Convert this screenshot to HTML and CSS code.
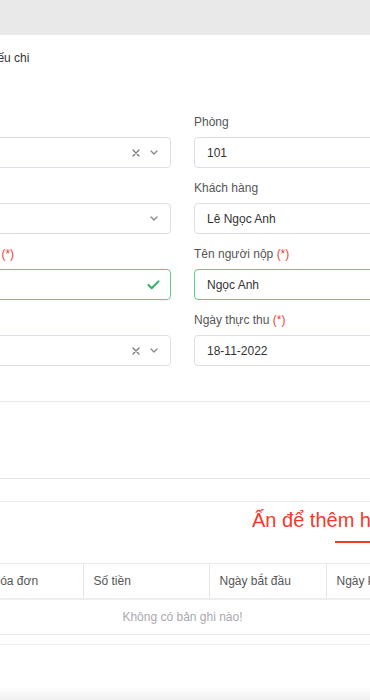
FILE: index.html
```html
<!DOCTYPE html>
<html lang="vi">
<head>
    <meta charset="utf-8">
    <title>Phiếu chi</title>
    <link rel="stylesheet" href="styles.css">
</head>
<body>
<div class="topbar"></div>
<div class="sheet">
    <h2 class="title">Thông tin phiếu chi</h2>

    <div class="form-grid">
        <div class="field">
            <label>Tòa nhà</label>
            <div class="control">
                <span class="value"></span>
                <span class="icons">
                    <svg class="ic-clear" viewBox="0 0 8 8"><path d="M1 1 7 7M7 1 1 7"/></svg>
                    <svg class="ic-caret" viewBox="0 0 8 5"><path d="M1 1 4 4 7 1"/></svg>
                </span>
            </div>
        </div>
        <div class="field">
            <label>Phòng</label>
            <div class="control"><span class="value">101</span></div>
        </div>

        <div class="field">
            <label>Hợp đồng</label>
            <div class="control">
                <span class="value"></span>
                <span class="icons">
                    <svg class="ic-caret" viewBox="0 0 8 5"><path d="M1 1 4 4 7 1"/></svg>
                </span>
            </div>
        </div>
        <div class="field">
            <label>Khách hàng</label>
            <div class="control"><span class="value">Lê Ngọc Anh</span></div>
        </div>

        <div class="field">
            <label>Mức tiền nộp <span class="req">(*)</span></label>
            <div class="control is-valid">
                <span class="value"></span>
                <span class="icons">
                    <svg class="ic-check" viewBox="0 0 14 11"><path d="M1.5 5.5 5 9 12.5 1.5"/></svg>
                </span>
            </div>
        </div>
        <div class="field">
            <label>Tên người nộp <span class="req">(*)</span></label>
            <div class="control is-valid"><span class="value">Ngọc Anh</span></div>
        </div>

        <div class="field">
            <label>Hình thức</label>
            <div class="control">
                <span class="value"></span>
                <span class="icons">
                    <svg class="ic-clear" viewBox="0 0 8 8"><path d="M1 1 7 7M7 1 1 7"/></svg>
                    <svg class="ic-caret" viewBox="0 0 8 5"><path d="M1 1 4 4 7 1"/></svg>
                </span>
            </div>
        </div>
        <div class="field">
            <label>Ngày thực thu <span class="req">(*)</span></label>
            <div class="control"><span class="value">18-11-2022</span></div>
        </div>
    </div>

    <div class="section-gap"></div>
    <div class="strip"></div>

    <div class="add-row">
        <span class="add-link">Ấn để thêm hóa đơn</span>
    </div>
    <div class="tab-line"><span class="tab-ink"></span></div>

    <table class="grid">
        <colgroup>
            <col class="c0"><col class="c1"><col class="c2"><col class="c3"><col class="c4">
        </colgroup>
        <thead>
        <tr>
            <th>STT</th>
            <th>Hóa đơn</th>
            <th>Số tiền</th>
            <th>Ngày bắt đầu</th>
            <th>Ngày kết thúc</th>
        </tr>
        </thead>
        <tbody>
        <tr>
            <td class="empty" colspan="5">Không có bản ghi nào!</td>
        </tr>
        </tbody>
    </table>
    <div class="table-foot"></div>
</div>
<div class="fade"></div>
</body>
</html>
```

FILE: styles.css
```css
* {
    box-sizing: border-box;
    margin: 0;
    padding: 0;
}
html, body {
    width: 370px;
    height: 700px;
    overflow: hidden;
}
body {
    font-family: "Liberation Sans", Arial, sans-serif;
    font-size: 12px;
    color: #333;
    background: #fff;
    display: flex;
    flex-direction: column;
}
.topbar {
    height: 35px;
    flex: none;
    background: #e9e9ea;
}
.sheet {
    width: 509px;
    margin-left: -72px;
    flex: none;
}
.title {
    font-size: 12px;
    font-weight: normal;
    line-height: 16px;
    color: #333;
    margin-top: 15px;
}
.form-grid {
    display: grid;
    grid-template-columns: 243px 243px;
    column-gap: 23px;
    row-gap: 12px;
    margin-top: 48px;
}
.field label {
    display: block;
    line-height: 16px;
    color: #555;
    white-space: nowrap;
    text-align: left;
}
.req {
    color: #e8453c;
}
.control {
    margin-top: 7px;
    height: 31px;
    border: 1px solid #dcdfe6;
    border-radius: 4px;
    display: flex;
    align-items: center;
    padding: 0 12px;
}
.control.is-valid {
    border-color: #5fcd86;
}
.value {
    flex: 1;
    color: #333;
}
.icons {
    display: flex;
    align-items: center;
    gap: 10px;
}
.icons svg {
    fill: none;
    stroke-linecap: round;
    stroke-linejoin: round;
}
.ic-clear {
    width: 8px;
    height: 8px;
    stroke: #777;
    stroke-width: 1.3;
}
.ic-caret {
    width: 8px;
    height: 5px;
    stroke: #888;
    stroke-width: 1.3;
}
.ic-check {
    width: 13px;
    height: 10px;
    stroke: #2bb45c;
    stroke-width: 2.2;
    margin-right: -2px;
}
.section-gap {
    margin-top: 35px;
    height: 77px;
    border-top: 1px solid #e9e9ec;
}
.strip {
    height: 24px;
    border-top: 1px solid #e4e4ea;
    border-bottom: 1px solid #ececf0;
}
.add-row {
    padding-left: 324px;
    margin-top: 6px;
    height: 24px;
    line-height: 24px;
    white-space: nowrap;
    overflow: hidden;
}
.add-link {
    font-size: 20px;
    color: #f5382b;
}
.tab-line {
    height: 2px;
    margin-top: 9px;
    padding-left: 407px;
    display: flex;
}
.tab-ink {
    width: 100px;
    height: 2px;
    background: #f5382b;
}
.grid {
    margin-top: 20px;
    width: 509px;
    table-layout: fixed;
    border-collapse: collapse;
}
.c0 { width: 53px; }
.c1 { width: 102px; }
.c2 { width: 126px; }
.c3 { width: 117px; }
.c4 { width: 111px; }
.grid th {
    height: 35px;
    font-weight: normal;
    text-align: left;
    color: #555;
    padding: 0 10px;
    border-top: 1px solid #e9e9ec;
    border-bottom: 2px solid #eeeef1;
    border-right: 1px solid #e6e6ea;
    white-space: nowrap;
    overflow: hidden;
}
.grid td.empty {
    height: 36px;
    text-align: center;
    color: #a9a9b0;
    border-bottom: 1px solid #e9e9ec;
}
.table-foot {
    height: 10px;
    border-bottom: 1px solid #f0f0f3;
}
.fade {
    margin-top: auto;
    height: 14px;
    flex: none;
    background: linear-gradient(#fff, #f1f1f2);
}
```
